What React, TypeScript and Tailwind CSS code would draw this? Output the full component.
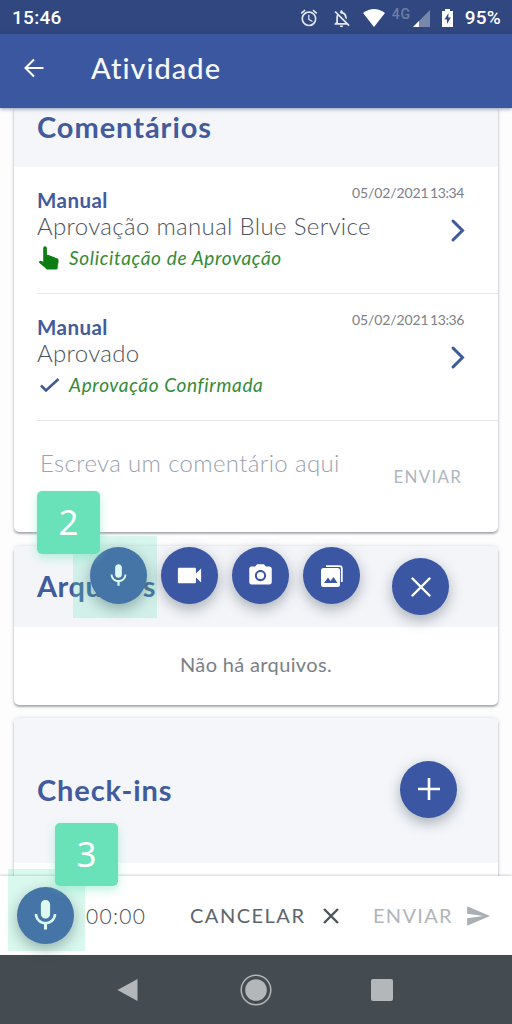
import type { ReactNode } from "react";
import { MdAlarm, MdMic, MdVideocam, MdCameraAlt, MdSend, MdOutlineNotificationsOff } from "react-icons/md";

function Fab({ children, className = "bg-[#3b56a2]" }: { children: ReactNode; className?: string }) {
  return (
    <button className={`flex h-[57px] w-[57px] shrink-0 items-center justify-center rounded-full text-white shadow-[0_5px_14px_rgba(40,60,70,0.38)] ${className}`}>
      {children}
    </button>
  );
}

function Step({ n, className }: { n: number; className: string }) {
  return (
    <div className={`absolute z-20 flex h-[63px] w-[63px] items-center justify-center rounded-[5px] bg-[#69e2ba] font-['Noto_Sans'] text-[35px] text-white shadow-[0_4px_10px_rgba(105,226,186,0.45)] ${className}`}>
      {n}
    </div>
  );
}

function Comment({ text, date, time, icon, status }: { text: string; date: string; time: string; icon: ReactNode; status: string }) {
  return (
    <div className="ml-[23px] flex h-[127px] justify-between border-b border-[#e3e6ee] pr-[33px] whitespace-nowrap">
      <div className="pt-[21px]">
        <div className="h-[25px] text-[20.5px] leading-[25px] font-bold tracking-[0.45px] text-[#425b9c]">Manual</div>
        <div className="h-[26px] text-[24px] leading-[25px] font-light tracking-[0.34px] text-[#4e545d]">{text}</div>
        <div className="flex h-[38px] items-center">
          <span className="flex w-[32px]">{icon}</span>
          <span className="text-[19px] tracking-[0.65px] text-[#348a35] italic">{status}</span>
        </div>
      </div>
      <div className="relative flex flex-col items-end pt-[17px]">
        <span className="absolute top-[16px] right-[1px] text-[14px] leading-[20px] tracking-[-0.1px] text-[#7b8088] [word-spacing:-2px]">
          {date} <span className="tracking-[-0.4px]">{time}</span>
        </span>
        <svg className="mt-[34px]" width="15" height="25" viewBox="0 0 15 25" fill="none" stroke="#3e599d" strokeWidth="3" strokeLinecap="round">
          <path d="M3 3 L12.5 12.5 L3 22" />
        </svg>
      </div>
    </div>
  );
}

const card = "relative mx-[14px] bg-white shadow-[0_2px_2px_rgba(60,65,75,0.38),0_0_4px_rgba(60,65,90,0.18)]";

export default function App() {
  return (
    <div className="relative flex h-[1024px] w-[512px] flex-col overflow-hidden bg-[#fdfdfe] font-['Lato',sans-serif]">
      <div className="flex h-[34px] shrink-0 items-center bg-[#30477f] pt-[2px] pr-[11px] pl-[12px] font-['Roboto'] text-[19px] font-medium text-white">
        <span className="mr-auto tracking-[0.3px]">15:46</span>
        <MdAlarm size={20} className="mr-[12px] text-[#e2e7f3]" />
        <MdOutlineNotificationsOff size={21} className="mr-[11px] text-[#e2e7f3]" />
        <svg width="22" height="18" viewBox="0 0 22 18" className="mr-[7px]" fill="#fff">
          <path d="M0 4 Q11 -4 22 4 L11 18 Z" />
        </svg>
        <span className="mb-[8px] text-[14px] tracking-[0.8px] text-[#6d7ea9]">4G</span>
        <svg width="17" height="17" viewBox="0 0 17 17" className="mr-[12px] ml-[2px]">
          <path d="M0 17 L17 0 V17Z" fill="#7787ae" />
          <path d="M0 17 L6 11 V17Z" fill="#fff" />
        </svg>
        <svg width="11" height="18" viewBox="0 0 11 18" className="mr-[12px]">
          <path d="M3 0h5v2h3v16H0V2h3z" fill="#fff" />
          <path d="M6.5 4 L2.5 10.5 H5 V15 L8.8 8.5 H6.3Z" fill="#30477f" />
        </svg>
        <span className="tracking-[0.2px]">95%</span>
      </div>
      <header className="relative z-10 flex h-[74px] shrink-0 items-center bg-[#3b579f] pb-[6px] pl-[23px] text-[#f7f9ff] shadow-[0_1px_4px_rgba(40,60,110,0.5)]">
        <svg width="22" height="20" viewBox="0 0 22 20" fill="none" stroke="currentColor" strokeWidth="2.1">
          <path d="M20.5 10H3M11 1.5 L2.5 10 L11 18.5" />
        </svg>
        <h1 className="ml-[46px] pb-[1px] text-[29px] font-medium tracking-[1px]">Atividade</h1>
      </header>

      <main className="flex h-[768px] shrink-0 flex-col overflow-hidden">
        <section className={`${card} h-[424px] shrink-0 rounded-b-[5px]`}>
          <div className="h-[59px] bg-[#f4f6fa] pt-[2px] pl-[23px]">
            <h2 className="text-[29px] leading-[34px] font-bold tracking-[0.95px] text-[#425b9c]">Comentários</h2>
          </div>
          <Comment
            text="Aprovação manual Blue Service"
            date="05/02/2021"
            time="13:34"
            icon={
              <svg width="25" height="24" viewBox="0 0 25 24" fill="#0c7d12">
                <path d="M6.2 2.2 Q6.2 0.3 8 0.3 Q9.9 0.3 9.9 2.2 V8.8 L11.5 9 Q12.8 9 13.4 10 Q15 9.6 15.9 10.9 Q17.6 10.6 18.3 12 Q21.6 11.8 21.6 14.6 Q21.6 17.5 20.7 19.4 V22 Q20.7 23.4 19.3 23.4 H10 Q8.8 23.4 8.4 22 L2.4 17 Q1.4 15.8 2.8 14.9 Q4.2 14.2 6.2 15.9Z" />
              </svg>
            }
            status="Solicitação de Aprovação"
          />
          <Comment
            text="Aprovado"
            date="05/02/2021"
            time="13:36"
            icon={
              <svg width="25" height="18" viewBox="0 0 25 18" fill="none" stroke="#405996" strokeWidth="2.5">
                <path d="M4 9.5 L9 14.5 L21.5 3" />
              </svg>
            }
            status="Aprovação Confirmada"
          />
          <div className="flex justify-between pr-[36px] pl-[26px] whitespace-nowrap">
            <span className="mt-[28px] text-[24px] leading-[28px] font-light tracking-[0.35px] text-[#9aa2ad]">Escreva um comentário aqui</span>
            <span className="mt-[46px] text-[17px] leading-[20px] tracking-[1.2px] text-[#adb6c1]">ENVIAR</span>
          </div>
        </section>

        <section className={`${card} mt-[14px] h-[159px] shrink-0 rounded-[5px]`}>
          <div className="h-[81px] rounded-t-[5px] bg-[#f4f5f9] pt-[23px] pl-[23px]">
            <h2 className="text-[29px] leading-[34px] font-bold tracking-[0.5px] text-[#425b9c]">Arquivos</h2>
          </div>
          <p className="pt-[24px] text-center text-[20px] leading-[26px] tracking-[0.35px] text-[#7b8087]">Não há arquivos.</p>
          <div className="absolute top-[-10px] left-[59px] h-[82px] w-[84px] bg-[#69e2ba]/25" />
          <div className="absolute top-[1px] left-[76px] flex gap-[14px]">
            <Fab className="bg-[#4574a6]"><MdMic size={27} className="text-[#dcf8f1]" /></Fab>
            <Fab><MdVideocam size={31} /></Fab>
            <Fab><MdCameraAlt size={27} /></Fab>
            <Fab>
              <svg width="22" height="22" viewBox="0 0 22 22">
                <path d="M5 1.2 H18.5 Q20.8 1.2 20.8 3.5 V17" fill="none" stroke="#fff" strokeWidth="1.8" />
                <rect x="0" y="3" width="19" height="19" rx="2.5" fill="#fff" />
                <path d="M3 18 L7 12.5 L9.5 16 L12.5 12 L16.5 18Z" fill="#3b56a2" />
              </svg>
            </Fab>
            <div className="mt-[11px] ml-[18px]">
              <Fab>
                <svg width="20" height="20" viewBox="0 0 20 20" stroke="#fff" strokeWidth="2.4" strokeLinecap="round"><path d="M1.5 1.5 L18.5 18.5 M18.5 1.5 L1.5 18.5" /></svg>
              </Fab>
            </div>
          </div>
        </section>

        <section className={`${card} mt-[13px] h-[190px] shrink-0 rounded-t-[5px]`}>
          <div className="flex h-[145px] items-center justify-between rounded-t-[5px] bg-[#f4f6fa] pr-[41px] pb-[3px] pl-[23px]">
            <h2 className="pt-[2px] text-[29px] leading-[34px] font-bold tracking-[0.9px] text-[#425b9c]">Check-ins</h2>
            <Fab>
              <svg width="22" height="22" viewBox="0 0 22 22" stroke="#fff" strokeWidth="2.6"><path d="M0 11 H22 M11 0 V22" /></svg>
            </Fab>
          </div>
        </section>
      </main>

      <div className="relative z-10 flex h-[79px] shrink-0 items-center bg-white pl-[17px] whitespace-nowrap shadow-[0_-1px_2px_rgba(60,65,90,0.22)]">
        <div className="absolute top-[-7px] left-[8px] h-[82px] w-[77px] bg-[#69e2ba]/25" />
        <Fab className="relative bg-[#4574a6]"><MdMic size={37} className="text-[#dcf8f1]" /></Fab>
        <span className="ml-[12px] w-[60px] text-[21px] font-light tracking-[1.3px] text-[#444c53]">00:00</span>
        <span className="ml-[44px] w-[116px] pb-[2px] text-[20px] tracking-[1.5px] text-[#5c656c]">CANCELAR</span>
        <svg className="ml-[17px]" width="16" height="16" viewBox="0 0 16 16" stroke="#4b555c" strokeWidth="2.4"><path d="M1 1 L15 15 M15 1 L1 15" /></svg>
        <span className="ml-[34px] w-[80px] pb-[2px] text-[20px] tracking-[1.3px] text-[#b1b6ba]">ENVIAR</span>
        <MdSend size={26} className="ml-[12px] text-[#a9afb2]" />
      </div>

      <nav className="flex h-[69px] shrink-0 items-center bg-[#444c51] pl-[117px]">
        <svg width="21" height="24" viewBox="0 0 21 24" fill="#b3b7ba"><path d="M20.5 1 V23 L0.5 12Z" /></svg>
        <svg className="ml-[102px]" width="32" height="32" viewBox="0 0 32 32"><circle cx="16" cy="16" r="14.8" fill="none" stroke="#b3b7ba" strokeWidth="1.5" /><circle cx="16" cy="16" r="10.8" fill="#b3b7ba" /></svg>
        <div className="ml-[99px] h-[22px] w-[22px] rounded-[2px] bg-[#b3b7ba]" />
      </nav>

      <Step n={2} className="top-[491px] left-[37px]" />
      <Step n={3} className="top-[823px] left-[55px]" />
    </div>
  );
}
